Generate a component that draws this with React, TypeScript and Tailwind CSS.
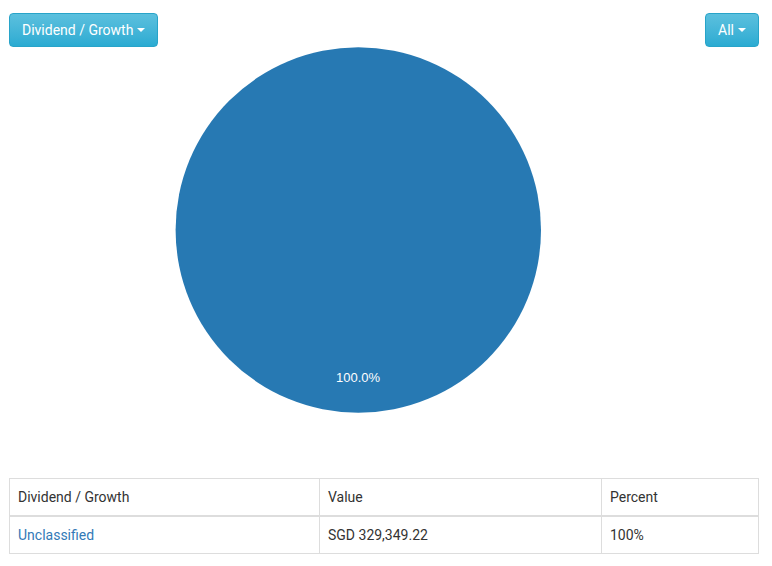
import { ReactNode } from 'react';

function Caret() {
  return (
    <span className="ml-[4px] inline-block h-0 w-0 border-x-[4px] border-t-[4px] border-x-transparent border-t-white align-middle" />
  );
}

function InfoButton({ children }: { children: ReactNode }) {
  return (
    <button
      type="button"
      className="flex h-[34px] items-center rounded-[4px] border border-[#28a4c9] bg-linear-to-b from-[#5bc0de] to-[#2aabd2] px-3 text-[14px] leading-5 text-white"
    >
      {children}
      <Caret />
    </button>
  );
}

const rows = [{ name: 'Unclassified', value: 'SGD 329,349.22', percent: '100%' }];

export default function App() {
  return (
    <div
      className="min-h-[566px] bg-white pl-[9px] pr-[13px] pt-[13px] text-[14px] text-[#333]"
      style={{ fontFamily: 'Roboto, "Liberation Sans", sans-serif' }}
    >
      {/* Toolbar */}
      <div className="flex items-start justify-between">
        <InfoButton>Dividend / Growth</InfoButton>
        <InfoButton>All</InfoButton>
      </div>

      {/* Pie chart */}
      <svg width="750" height="431" className="block">
        <circle cx="349.3" cy="183" r="182.7" fill="#2779b3" />
        <text
          x="349"
          y="335"
          textAnchor="middle"
          fill="#fff"
          fontSize="13"
          fontFamily='"Liberation Sans", Arial, sans-serif'
        >
          100.0%
        </text>
      </svg>

      {/* Table */}
      <table className="w-[750px] table-fixed border-collapse border border-[#ddd]">
        <thead>
          <tr>
            <th className="w-[310px] border border-b-2 border-[#ddd] px-2 py-2 text-left font-normal leading-5">
              Dividend / Growth
            </th>
            <th className="w-[282px] border border-b-2 border-[#ddd] px-2 py-2 text-left font-normal leading-5">
              Value
            </th>
            <th className="border border-b-2 border-[#ddd] px-2 py-2 text-left font-normal leading-5">
              Percent
            </th>
          </tr>
        </thead>
        <tbody>
          {rows.map((row) => (
            <tr key={row.name}>
              <td className="border border-[#ddd] px-2 py-2 leading-5">
                <a href="#" className="text-[#337ab7]">
                  {row.name}
                </a>
              </td>
              <td className="border border-[#ddd] px-2 py-2 leading-5">{row.value}</td>
              <td className="border border-[#ddd] px-2 py-2 leading-5">{row.percent}</td>
            </tr>
          ))}
        </tbody>
      </table>
    </div>
  );
}
